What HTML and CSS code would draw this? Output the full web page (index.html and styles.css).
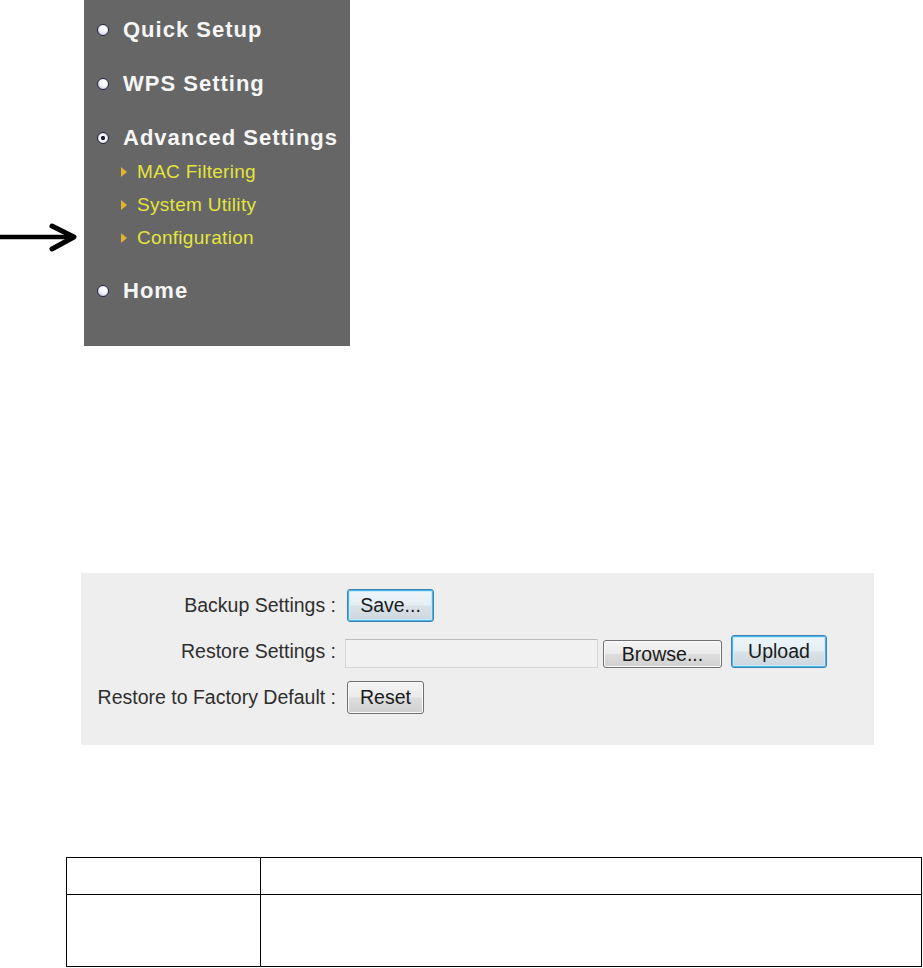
FILE: index.html
```html
<!DOCTYPE html>
<html lang="en">

<head>
  <meta charset="UTF-8">
  <meta name="viewport" content="width=device-width, initial-scale=1.0">
  <title>Configuration</title>
  <link rel="stylesheet" href="styles.css">
</head>

<body>
  <div class="menu-shot">
    <svg class="pointer" width="84" height="34" viewBox="0 0 84 34">
      <line x1="0" y1="15" x2="72" y2="15" stroke="#000" stroke-width="4.5" />
      <polyline points="52,4 74,15 52,27" fill="none" stroke="#000" stroke-width="5" stroke-linejoin="round" stroke-linecap="round" />
    </svg>

    <nav class="sidebar">
      <div class="menu-item"><span class="dot"></span>Quick Setup</div>
      <div class="menu-item"><span class="dot"></span>WPS Setting</div>
      <div class="menu-item open"><span class="dot active"></span>Advanced Settings</div>
      <ul class="submenu">
        <li><span class="tri"></span>MAC Filtering</li>
        <li><span class="tri"></span>System Utility</li>
        <li><span class="tri"></span>Configuration</li>
      </ul>
      <div class="menu-item"><span class="dot"></span>Home</div>
    </nav>
  </div>

  <div class="config-panel">
    <div class="form-row">
      <label class="row-label">Backup Settings :</label>
      <button class="btn btn-focus btn-save">Save...</button>
    </div>
    <div class="form-row">
      <label class="row-label">Restore Settings :</label>
      <input type="text" class="file-path" readonly>
      <button class="btn btn-browse">Browse...</button>
      <button class="btn btn-focus btn-upload">Upload</button>
    </div>
    <div class="form-row">
      <label class="row-label">Restore to Factory Default :</label>
      <button class="btn btn-reset">Reset</button>
    </div>
  </div>

  <table class="desc-table">
    <tr class="head-row">
      <td class="col-name"></td>
      <td></td>
    </tr>
    <tr class="body-row">
      <td class="col-name"></td>
      <td></td>
    </tr>
  </table>
</body>

</html>
```

FILE: styles.css
```css
body {
  margin: 0;
  font-family: "Liberation Sans", Arial, sans-serif;
  background: #fff;
}

/* menu screenshot with pointer arrow */

.menu-shot {
  display: flex;
  align-items: flex-start;
}

.pointer {
  display: block;
  margin-top: 222px;
  flex-shrink: 0;
}

.sidebar {
  width: 266px;
  height: 346px;
  box-sizing: border-box;
  padding-top: 13px;
  background-color: #666666;
}

.menu-item {
  display: flex;
  align-items: center;
  height: 34px;
  padding-left: 13px;
  margin-bottom: 20px;
  color: #f6f6f6;
  font-size: 22px;
  font-weight: bold;
  letter-spacing: 1px;
  white-space: nowrap;
}

.menu-item.open {
  margin-bottom: 0;
}

.dot {
  width: 12px;
  height: 12px;
  box-sizing: border-box;
  margin-right: 14px;
  border-radius: 50%;
  border: 1px solid #26264a;
  background: radial-gradient(circle at 60% 35%, #ffffff 0, #f4f4fc 45%, #c4c4de 80%, #5a5a80 100%);
  flex-shrink: 0;
}

.dot.active {
  background: radial-gradient(circle at 50% 50%, #1c1c3a 0, #1c1c3a 26%, #ffffff 34%, #eeeef8 60%, #6a6a90 100%);
}

.submenu {
  list-style: none;
  margin: 0 0 20px;
  padding: 0 0 0 37px;
}

.submenu li {
  display: flex;
  align-items: center;
  height: 33px;
  color: #e4e43e;
  font-size: 19px;
  letter-spacing: 0.3px;
  white-space: nowrap;
}

.tri {
  width: 0;
  height: 0;
  margin-right: 10px;
  border-left: 6px solid #e2b233;
  border-top: 5px solid transparent;
  border-bottom: 5px solid transparent;
}

/* backup / restore panel */

.config-panel {
  width: 793px;
  margin: 227px 0 0 81px;
  padding: 15px 0 31px;
  box-sizing: border-box;
  background-color: #eeeeee;
}

.form-row {
  display: flex;
  align-items: center;
  height: 34px;
  margin-bottom: 12px;
}

.form-row:last-child {
  margin-bottom: 0;
}

.row-label {
  width: 255px;
  margin-right: 11px;
  text-align: right;
  color: #2e2e2e;
  font-size: 19.5px;
  white-space: nowrap;
}

.btn {
  height: 33px;
  box-sizing: border-box;
  padding: 0;
  border: 1px solid #707070;
  border-radius: 3px;
  background: linear-gradient(#f4f4f4 0%, #ebebeb 48%, #dddddd 52%, #d0d0d0 100%);
  box-shadow: inset 0 0 0 1px #fbfbfb;
  color: #1a1a1a;
  font-family: "Liberation Sans", Arial, sans-serif;
  font-size: 19.5px;
  cursor: pointer;
}

.btn-focus {
  border-color: #3c7fb1;
  box-shadow: inset 0 0 0 1px #49b8ea, inset 0 0 0 2px #c6e8f8;
  background: linear-gradient(#eef6fa 0%, #e4eef4 48%, #d8e2e8 52%, #ccd6dc 100%);
}

.btn-save {
  width: 87px;
}

.btn-reset {
  width: 77px;
}

.file-path {
  width: 253px;
  height: 29px;
  box-sizing: border-box;
  margin: 4px 0 0 -2px;
  border: 1px solid #d6d6d6;
  border-top-color: #bcbcbc;
  background-color: #f1f1f1;
}

.btn-browse {
  width: 119px;
  height: 28px;
  margin: 5px 0 0 5px;
  line-height: 24px;
}

.btn-upload {
  width: 96px;
  margin-left: 9px;
}

/* empty description table */

.desc-table {
  width: 856px;
  margin: 112px 0 0 66px;
  border-collapse: collapse;
}

.desc-table td {
  border: 1px solid #000;
  padding: 0;
}

.col-name {
  width: 193px;
}

.head-row td {
  height: 36px;
}

.body-row td {
  height: 71px;
}
```
